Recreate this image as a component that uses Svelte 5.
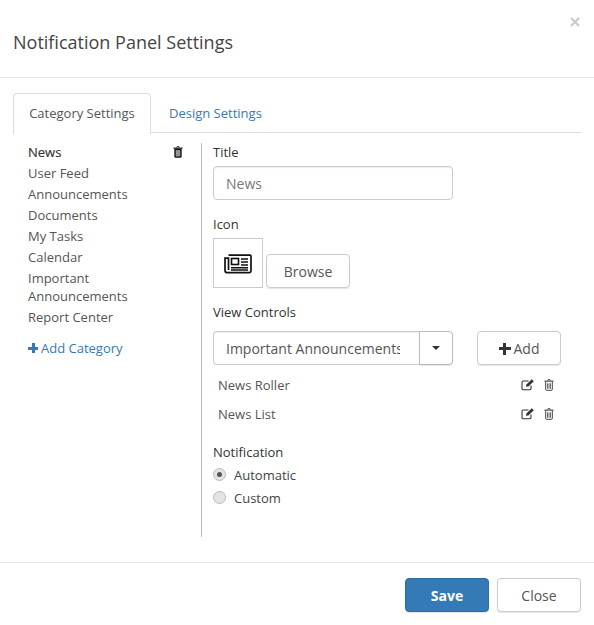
<script>
	const categories = ["News", "User Feed", "Announcements", "Documents", "My Tasks", "Calendar", "Important Announcements", "Report Center"];
	const controls = ["News Roller", "News List"];
</script>

{#snippet trash(cls)}
	<svg class={cls} viewBox="0 0 12 14" width="10" height="12" aria-hidden="true">
		<path d="M4.2 1.8 L4.8 .6 H7.2 L7.8 1.8" fill="none" stroke="currentColor" stroke-width="1"/>
		<path d="M.5 2.4 H11.5" stroke="currentColor" stroke-width="1.2"/>
		<path d="M2 3 V12 Q2 13.4 3.2 13.4 H8.8 Q10 13.4 10 12 V3" fill="none" stroke="currentColor" stroke-width="1.1"/>
		<path d="M4.2 5 V11.5 M6 5 V11.5 M7.8 5 V11.5" stroke="currentColor" stroke-width=".9"/>
	</svg>
{/snippet}

<div class="dialog">
	<header>
		<h4>Notification Panel Settings</h4>
		<button class="x" aria-label="Close">
			<svg viewBox="0 0 10 10" width="10" height="10"><path d="M1 1 L9 9 M9 1 L1 9" stroke="#c8c8c8" stroke-width="2"/></svg>
		</button>
	</header>

	<div class="body">
		<nav class="tabs">
			<span class="tab active">Category Settings</span>
			<span class="tab">Design Settings</span>
		</nav>

		<div class="panes">
			<aside>
				<ul>
					{#each categories as cat, i}
						<li class:current={i === 0}>
							<span>{cat}</span>
							{#if i === 0}
								<svg class="solid" viewBox="0 0 12 14" width="10" height="12" aria-hidden="true">
									<path d="M4.2 1.8 L4.8 .6 H7.2 L7.8 1.8" fill="none" stroke="currentColor" stroke-width="1"/>
									<path d="M.5 2.4 H11.5" stroke="currentColor" stroke-width="1.4"/>
									<path fill-rule="evenodd" d="M1.6 3 H10.4 V12 Q10.4 13.8 8.8 13.8 H3.2 Q1.6 13.8 1.6 12 Z M3.4 5 V12 H8.6 V5 Z" fill="currentColor"/>
									<rect x="3.4" y="5" width="5.2" height="7" fill="currentColor" opacity=".45"/>
								</svg>
							{/if}
						</li>
					{/each}
				</ul>
				<a class="add-cat" href="#add"><span class="plus small"></span>Add Category</a>
			</aside>

			<section>
				<label for="title">Title</label>
				<input id="title" type="text" value="News" />

				<div class="label icon-label">Icon</div>
				<div class="icon-row">
					<div class="icon-box">
						<svg class="news" viewBox="0 0 28 20" width="28" height="20" fill="none" stroke="#111" aria-hidden="true">
							<path d="M4.5 1.2 H26 Q27 1.2 27 2.2 V17 Q27 18.6 25.4 18.6 H3 Q1 18.6 1 16.6 V4.2 H4.5 V16" stroke-width="1.7"/>
							<rect x="7.5" y="4.5" width="7" height="6" stroke-width="1.6"/>
							<path d="M17 5 H24 M17 8 H24 M17 11 H24 M7 13.8 H24 M7 16 H24" stroke-width="1.4"/>
						</svg>
					</div>
					<button class="btn browse">Browse</button>
				</div>

				<div class="label vc-label">View Controls</div>
				<div class="vc-row">
					<div class="combo">
						<input type="text" value="Important Announcements" />
						<button class="caret-btn" aria-label="Open"><span class="caret"></span></button>
					</div>
					<button class="btn add"><span class="plus"></span>Add</button>
				</div>

				<div class="controls">
					{#each controls as c}
						<div class="control">
							<span>{c}</span>
							<span class="actions">
								<svg viewBox="0 0 14 13" width="14" height="13" fill="none" stroke="#333" aria-hidden="true">
									<path d="M10 7.5 V10.5 Q10 11.7 8.8 11.7 H2.2 Q1 11.7 1 10.5 V4.2 Q1 3 2.2 3 H7.5" stroke-width="1.1"/>
									<path d="M5 8.8 L5.4 6.6 L10.8 1.2 L12.8 3.2 L7.4 8.6 Z" fill="#333" stroke="none"/>
								</svg>
								{@render trash("thin")}
							</span>
						</div>
					{/each}
				</div>

				<div class="label notif-label">Notification</div>
				<div class="radio first"><span class="dot on"></span>Automatic</div>
				<div class="radio"><span class="dot"></span>Custom</div>
			</section>
		</div>
	</div>

	<footer>
		<button class="btn save">Save</button>
		<button class="btn">Close</button>
	</footer>
</div>

<style>
	:global(body) {
		margin: 0;
		background: #fff;
	}

	.dialog {
		width: 594px;
		height: 625px;
		display: flex;
		flex-direction: column;
		font-family: "Open Sans", sans-serif;
		font-size: 13px;
		color: #555;
		box-sizing: border-box;
	}

	header {
		height: 77px;
		flex: none;
		box-sizing: content-box;
		border-bottom: 1px solid #e5e5e5;
		position: relative;
		display: flex;
		align-items: center;
		padding-left: 13px;
	}

	h4 {
		margin: 0;
		font-size: 18px;
		font-weight: 400;
		color: #444;
		line-height: 26px;
		position: relative;
		top: 3px;
	}

	.x {
		position: absolute;
		top: 17px;
		right: 14px;
		padding: 0;
		border: none;
		background: none;
		line-height: 0;
	}

	.body {
		flex: 1;
		padding: 15px 13px 0;
	}

	.tabs {
		display: flex;
		height: 39px;
		border-bottom: 1px solid #ddd;
	}

	.tab {
		padding: 0 17px;
		line-height: 39px;
		color: #337ab7;
		border: 1px solid transparent;
		border-bottom: none;
	}

	.tab.active {
		width: 136px;
		box-sizing: content-box;
		padding: 0;
		text-align: center;
		height: 40px;
		background: #fff;
		color: #555;
		border-color: #ddd;
		border-radius: 4px 4px 0 0;
	}

	.panes {
		display: flex;
		margin-top: 10px;
		height: 394px;
	}

	aside {
		width: 189px;
		box-sizing: border-box;
		padding-left: 15px;
		border-right: 1px solid #bbb;
		flex: none;
	}

	ul {
		list-style: none;
		margin: 0;
		padding: 0;
	}

	li {
		display: flex;
		justify-content: space-between;
		align-items: flex-start;
		line-height: 18px;
		padding: 0 0 3px;
		width: 155px;
		color: #555;
	}

	li span {
		max-width: 120px;
	}

	li.current {
		color: #333;
		-webkit-text-stroke: 0.15px #333;
	}

	li svg {
		color: #111;
		margin-top: 3px;
	}

	.add-cat {
		display: block;
		margin-top: 10px;
		color: #337ab7;
		text-decoration: none;
		line-height: 18px;
	}

	.plus {
		display: inline-block;
		width: 12px;
		height: 12px;
		margin-right: 3px;
		vertical-align: -1px;
		color: #333;
		background:
			linear-gradient(currentColor, currentColor) center / 100% 3px no-repeat,
			linear-gradient(currentColor, currentColor) center / 3px 100% no-repeat;
	}

	.plus.small {
		width: 10px;
		height: 10px;
		margin-right: 3px;
		color: #337ab7;
		vertical-align: 0;
	}

	section {
		flex: 1;
		padding-left: 11px;
		display: flex;
		flex-direction: column;
		align-items: flex-start;
	}

	label, .label {
		display: block;
		color: #333;
		line-height: 18px;
	}

	input {
		font: inherit;
		font-size: 14px;
		color: #555;
		box-sizing: border-box;
		height: 34px;
		padding: 0 12px;
		border: 1px solid #ccc;
		border-radius: 4px;
		background: #fff;
		box-shadow: inset 0 1px 1px rgba(0,0,0,.075);
		outline: none;
	}

	#title {
		margin-top: 5px;
		width: 240px;
		color: #777;
	}

	.icon-label {
		margin-top: 15px;
	}

	.icon-row {
		display: flex;
		align-items: flex-end;
		gap: 3px;
		margin-top: 5px;
	}

	.icon-box {
		width: 50px;
		height: 50px;
		box-sizing: border-box;
		border: 1px solid #ccc;
		display: flex;
		align-items: center;
		justify-content: center;
	}

	.news {
		margin-top: 2px;
	}

	.btn {
		font: inherit;
		font-size: 14px;
		color: #555;
		width: 84px;
		height: 34px;
		box-sizing: border-box;
		padding: 0;
		background: #fff;
		border: 1px solid #ccc;
		border-radius: 4px;
		box-shadow: 0 1px 1px rgba(0,0,0,.1);
	}

	.vc-label {
		margin-top: 15px;
	}

	.vc-row {
		display: flex;
		gap: 24px;
		margin-top: 10px;
	}

	.combo {
		display: flex;
		width: 240px;
	}

	.combo input {
		width: 206px;
		padding-right: 19px;
		border-right: none;
		border-radius: 4px 0 0 4px;
	}

	.caret-btn {
		width: 34px;
		height: 34px;
		box-sizing: border-box;
		padding: 0;
		border: 1px solid #bbb;
		border-radius: 0 4px 4px 0;
		background: #fff;
		box-shadow: 0 1px 1px rgba(0,0,0,.1);
		display: flex;
		align-items: center;
		justify-content: center;
	}

	.caret {
		width: 0;
		height: 0;
		border-left: 4px solid transparent;
		border-right: 4px solid transparent;
		border-top: 4px solid #333;
	}

	.controls {
		margin-top: 5px;
	}

	.control {
		display: flex;
		justify-content: space-between;
		align-items: center;
		width: 341px;
		padding-left: 5px;
		box-sizing: border-box;
		height: 29px;
	}

	.actions {
		display: flex;
		align-items: center;
		gap: 9px;
		color: #333;
	}

	.notif-label {
		margin-top: 15px;
	}

	.radio {
		display: flex;
		align-items: center;
		height: 23px;
		color: #444;
	}

	.radio.first {
		margin-top: 2px;
	}

	.dot {
		width: 11px;
		height: 11px;
		margin-right: 8px;
		border-radius: 50%;
		background: #e4e4e4;
		border: 1px solid #bbb;
		position: relative;
	}

	.dot.on::after {
		content: "";
		position: absolute;
		left: 3px;
		top: 3px;
		width: 5px;
		height: 5px;
		border-radius: 50%;
		background: #555;
	}

	footer {
		height: 63px;
		flex: none;
		border-top: 1px solid #e5e5e5;
		display: flex;
		justify-content: flex-end;
		align-items: flex-start;
		gap: 8px;
		padding: 15px 13px 0;
		box-sizing: border-box;
	}

	.save {
		background: #337ab7;
		border-color: #2e6da4;
		color: #fff;
		font-weight: 700;
	}
</style>
